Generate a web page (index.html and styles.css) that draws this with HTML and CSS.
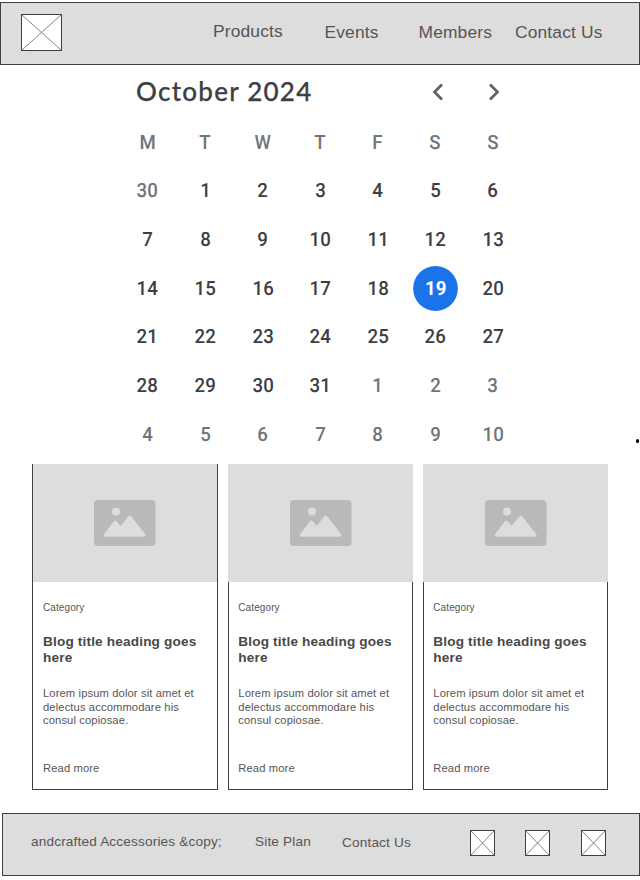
FILE: index.html
```html
<!DOCTYPE html>
<html lang="en">
<head>
<meta charset="utf-8">
<title>October 2024</title>
<link rel="stylesheet" href="styles.css">
</head>
<body>
<svg class="defs" width="0" height="0" aria-hidden="true">
  <symbol id="picture" viewBox="0 0 62 46">
    <rect width="61.5" height="46" rx="4" fill="#b9b9b9"/>
    <circle cx="22" cy="11.5" r="4" fill="#ddd"/>
    <path d="M11.5 35 21.3 22.3 26.8 28.3 35.8 17.2 49.8 35Z" fill="#ddd" stroke="#ddd" stroke-width="3.4" stroke-linejoin="round"/>
  </symbol>
</svg>
<header class="bar top">
  <svg class="logo" width="41" height="37" viewBox="0 0 41 37"><rect x=".5" y=".5" width="40" height="36" fill="#fff" stroke="#404040"/><path d="M1 1 40 36M40 1 1 36" stroke="#858585"/></svg>
  <nav class="links">
    <a class="products">Products</a>
    <a class="events">Events</a>
    <a class="members">Members</a>
    <a class="contact">Contact Us</a>
  </nav>
</header>
<main>
  <section class="calendar">
    <div class="month">
      <h1>October 2024</h1>
      <svg class="prev" width="12" height="18" viewBox="0 0 12 18"><path d="M10 1.5 2.5 9 10 16.5" /></svg>
      <svg class="next" width="12" height="18" viewBox="0 0 12 18"><path d="M2 1.5 9.5 9 2 16.5" /></svg>
    </div>
    <div class="week names"><span>M</span><span>T</span><span>W</span><span>T</span><span>F</span><span>S</span><span>S</span></div>
    <div class="week days">
      <span class="out">30</span><span>1</span><span>2</span><span>3</span><span>4</span><span>5</span><span>6</span>
      <span>7</span><span>8</span><span>9</span><span>10</span><span>11</span><span>12</span><span>13</span>
      <span>14</span><span>15</span><span>16</span><span>17</span><span>18</span><span class="today">19</span><span>20</span>
      <span>21</span><span>22</span><span>23</span><span>24</span><span>25</span><span>26</span><span>27</span>
      <span>28</span><span>29</span><span>30</span><span>31</span><span class="out">1</span><span class="out">2</span><span class="out">3</span>
      <span class="out">4</span><span class="out">5</span><span class="out">6</span><span class="out">7</span><span class="out">8</span><span class="out">9</span><span class="out">10</span>
    </div>
    <i class="dot"></i>
  </section>
  <section class="cards">
    <article class="card outlined">
      <div class="media"><svg width="62" height="46"><use href="#picture"/></svg></div>
      <div class="body"><p class="category">Category</p><h2>Blog title heading goes<br>here</h2><p class="text">Lorem ipsum dolor sit amet et<br>delectus accommodare his<br>consul copiosae.</p><a class="more">Read more</a></div>
    </article>
    <article class="card">
      <div class="media"><svg width="62" height="46"><use href="#picture"/></svg></div>
      <div class="body"><p class="category">Category</p><h2>Blog title heading goes<br>here</h2><p class="text">Lorem ipsum dolor sit amet et<br>delectus accommodare his<br>consul copiosae.</p><a class="more">Read more</a></div>
    </article>
    <article class="card">
      <div class="media"><svg width="62" height="46"><use href="#picture"/></svg></div>
      <div class="body"><p class="category">Category</p><h2>Blog title heading goes<br>here</h2><p class="text">Lorem ipsum dolor sit amet et<br>delectus accommodare his<br>consul copiosae.</p><a class="more">Read more</a></div>
    </article>
  </section>
</main>
<footer class="bar bottom">
  <span class="copy">andcrafted Accessories &amp;copy;</span>
  <a class="plan">Site Plan</a>
  <a class="foot-contact">Contact Us</a>
  <div class="social">
    <svg width="25" height="26" viewBox="0 0 25 26"><rect x=".5" y=".5" width="24" height="25" fill="#fff" stroke="#404040"/><path d="M1 1 24 25M24 1 1 25" stroke="#858585"/></svg>
    <svg width="25" height="26" viewBox="0 0 25 26"><rect x=".5" y=".5" width="24" height="25" fill="#fff" stroke="#404040"/><path d="M1 1 24 25M24 1 1 25" stroke="#858585"/></svg>
    <svg width="25" height="26" viewBox="0 0 25 26"><rect x=".5" y=".5" width="24" height="25" fill="#fff" stroke="#404040"/><path d="M1 1 24 25M24 1 1 25" stroke="#858585"/></svg>
  </div>
</footer>
</body>
</html>
```
FILE: styles.css
```css
* { box-sizing: border-box; }
body {
  margin: 0;
  padding-top: 2px;
  width: 640px;
  height: 880px;
  overflow: hidden;
  background: #fff;
  color: #555;
  font-family: "Liberation Sans", Arial, sans-serif;
}
h1, h2, p { margin: 0; }
svg { display: block; flex: none; }
.defs { position: absolute; }
.bar {
  display: flex;
  height: 63px;
  background: #ddd;
  border: 1px solid #404040;
  white-space: nowrap;
}
.logo { margin: 11px 0 0 20px; }
.links {
  display: flex;
  margin-top: 18px;
  font-size: 17.4px;
  line-height: 20px;
  letter-spacing: 0.15px;
}
.links a { flex: none; margin-top: 1px; }
.links .products { width: 111.5px; margin-left: 151px; margin-top: 0; }
.links .events { width: 94px; }
.links .members { width: 96.5px; }

.calendar { position: relative; height: 399px; }
.month { display: flex; height: 54px; padding-left: 136px; }
.month h1 {
  width: 295.5px;
  margin-top: 10px;
  font: 500 26px/32px Lato, sans-serif;
  letter-spacing: 1.25px;
  color: #3c4043;
  -webkit-text-stroke: 0.25px #3c4043;
}
.month svg { margin-top: 18px; fill: none; stroke: #5f6368; stroke-width: 2.7; }
.month .next { margin-left: 44.5px; }
.week {
  display: grid;
  grid-template-columns: repeat(7, 57.55px);
  width: 403px;
  margin-left: 118.8px;
  justify-items: center;
  align-items: center;
  font: 500 19.6px/24px Roboto, sans-serif;
  color: #3c4043;
}
.week span { transform: scaleX(0.95) rotate(0.03deg); }
.names { height: 48px; color: #70757a; }
.days { grid-auto-rows: 48.7px; }
.days .out { color: #70757a; }
.week .today {
  width: 47.4px;
  height: 45px;
  border-radius: 50%;
  background: #1a73e8;
  color: #fff;
  font-weight: 700;
  line-height: 45px;
  text-align: center;
}
.dot {
  position: absolute;
  left: 636px;
  top: 374px;
  width: 3px;
  height: 4px;
  border-radius: 1.5px;
  background: #000;
}

.cards {
  display: grid;
  grid-template-columns: 186px 185px 185px;
  gap: 10px;
  margin-left: 32px;
  height: 326px;
}
.card { display: flex; flex-direction: column; }
.media { height: 118px; padding: 36px 0 0 61.7px; background: #ddd; }
.outlined .media { padding-left: 60.7px; border: solid #404040; border-width: 0 1px; }
.body {
  flex: 1;
  padding: 20px 0 0 9.3px;
  border: 1px solid #404040;
  border-top: 0;
  white-space: nowrap;
}
.outlined .body { padding-left: 10px; }
.category { font-size: 10px; line-height: 12px; letter-spacing: 0.1px; }
.card h2 { margin-top: 19.5px; font-size: 13.6px; line-height: 16px; letter-spacing: 0.17px; color: #484848; }
.text { margin-top: 21.5px; font-size: 11.2px; line-height: 13.5px; letter-spacing: 0.12px; }
.more { display: block; margin-top: 33px; font-size: 11.2px; line-height: 14px; letter-spacing: 0.12px; }

.bottom {
  width: 638px;
  margin: 23px 0 0 2px;
  font-size: 13.6px;
  line-height: 16px;
  letter-spacing: 0.17px;
}
.copy { width: 224px; margin: 19.5px 0 0 28px; }
.plan { width: 87px; margin-top: 19.5px; }
.foot-contact { width: 128px; margin-top: 20.5px; }
.social { display: flex; gap: 30px; margin-top: 16px; }
.social svg:last-child { margin-left: 1px; }
```
